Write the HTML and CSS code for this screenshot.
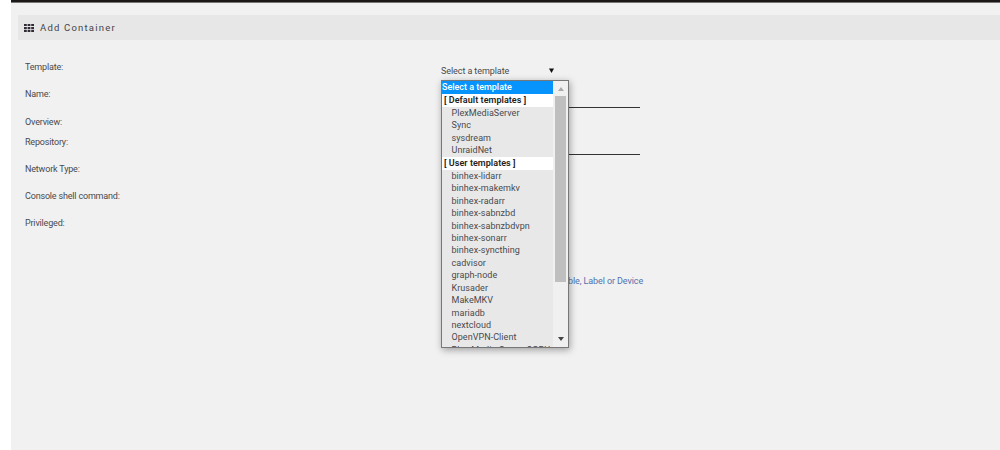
FILE: index.html
```
<!DOCTYPE html>
<html lang="en">
<head>
<meta charset="utf-8">
<title>Add Container</title>
<link rel="stylesheet" href="styles.css">
</head>
<body>
<main class="page">
  <header class="title-bar">
    <svg class="grid-icon" viewBox="0 0 10 8" width="10" height="8"><path d="M0 0h2.8v2.1H0zM3.6 0h2.8v2.1H3.6zM7.2 0H10v2.1H7.2zM0 2.9h2.8V5H0zM3.6 2.9h2.8V5H3.6zM7.2 2.9H10V5H7.2zM0 5.8h2.8v2.1H0zM3.6 5.8h2.8v2.1H3.6zM7.2 5.8H10v2.1H7.2z"/></svg>
    <h1 class="title">Add Container</h1>
  </header>
  <form class="form">
    <div class="row"><span class="label">Template:</span>
      <div class="select"><span>Select a template</span><svg class="caret" width="5" height="5" viewBox="0 0 5 5"><path d="M0 .5h5L2.5 5z"/></svg>
        <div class="menu">
          <div class="options">
            <div class="option selected">Select a template</div>
            <div class="option group">[ Default templates ]</div>
            <div class="option">PlexMediaServer</div>
            <div class="option">Sync</div>
            <div class="option">sysdream</div>
            <div class="option">UnraidNet</div>
            <div class="option group">[ User templates ]</div>
            <div class="option">binhex-lidarr</div>
            <div class="option">binhex-makemkv</div>
            <div class="option">binhex-radarr</div>
            <div class="option">binhex-sabnzbd</div>
            <div class="option">binhex-sabnzbdvpn</div>
            <div class="option">binhex-sonarr</div>
            <div class="option">binhex-syncthing</div>
            <div class="option">cadvisor</div>
            <div class="option">graph-node</div>
            <div class="option">Krusader</div>
            <div class="option">MakeMKV</div>
            <div class="option">mariadb</div>
            <div class="option">nextcloud</div>
            <div class="option">OpenVPN-Client</div>
            <div class="option">Plex-Media-Server-2GPU</div>
          </div>
          <div class="scrollbar">
            <svg class="up" width="6" height="4" viewBox="0 0 6 4"><path d="M0 4h6L3 0z"/></svg>
            <div class="thumb"></div>
            <svg class="down" width="6" height="4" viewBox="0 0 6 4"><path d="M0 0h6L3 4z"/></svg>
          </div>
        </div>
      </div>
    </div>
    <div class="row"><span class="label">Name:</span><div class="input"></div></div>
    <div class="row short"><span class="label">Overview:</span></div>
    <div class="row"><span class="label">Repository:</span><div class="input"></div></div>
    <div class="row"><span class="label">Network Type:</span></div>
    <div class="row"><span class="label">Console shell command:</span></div>
    <div class="row last"><span class="label">Privileged:</span></div>
    <div class="link-row"><a class="link">ble, Label or Device</a></div>
  </form>
</main>
</body>
</html>
```
FILE: styles.css
```
* { box-sizing: border-box; }
body { margin: 0; background: #fff; font: 9px/12px Roboto, "Noto Sans", sans-serif; letter-spacing: 0.05px; color: #484a4e; }
.page { height: 450px; margin-left: 11px; padding: 13px 0 0 7px; background: #f1f1f1; border-top: 2px solid #1c1818; box-shadow: inset 0 1px #777; overflow: hidden; }
.title-bar { display: flex; align-items: center; height: 25px; padding-left: 6px; gap: 6px; background: #e7e7e7; }
.grid-icon { fill: #302b35; }
.title { margin: 0; font-size: 9.5px; font-weight: 400; letter-spacing: 1.2px; color: #44454a; }
.form { padding: 21px 0 0 7px; }
.row { display: flex; height: 27.3px; }
.row.short { height: 20px; }
.row.last { height: 58px; }
.label { width: 416px; flex: none; letter-spacing: -0.18px; }
.select { position: relative; display: flex; justify-content: space-between; align-items: center; width: 113px; height: 18px; margin-top: 2px; padding-bottom: 2px; border-bottom: 1px solid #222; letter-spacing: -0.08px; }
.caret { fill: #111; }
.input { width: 199px; height: 19.4px; border-bottom: 1px solid #333; }
.menu { position: absolute; z-index: 1; left: 0; top: 17px; display: flex; width: 128px; height: 268px; border: 1px solid #777; background: #e8e8e8; box-shadow: 1px 2px 7px rgba(0, 0, 0, .35); overflow: hidden; letter-spacing: 0.05px; }
.options { width: 111px; flex: none; overflow: hidden; }
.option { height: 12.45px; padding-left: 9.5px; line-height: 12px; white-space: nowrap; }
.option.selected { height: 13px; padding-left: 0; background: #0693fb; color: #fff; font-weight: 500; letter-spacing: -0.02px; }
.option.group { height: 13px; padding-left: 2px; background: #fff; color: #222; font-weight: 600; }
.scrollbar { display: flex; flex-direction: column; align-items: center; width: 15px; background: #f0f0f0; padding: 6px 0 6px; }
.up { fill: #aaa; flex: none; }
.thumb { width: 11px; height: 186px; margin-top: 5px; background: #bfbfbf; }
.down { fill: #444; margin-top: auto; }
.link-row { display: flex; padding-left: 543px; }
.link { white-space: nowrap; color: #5272ae; letter-spacing: -0.1px; }
```
